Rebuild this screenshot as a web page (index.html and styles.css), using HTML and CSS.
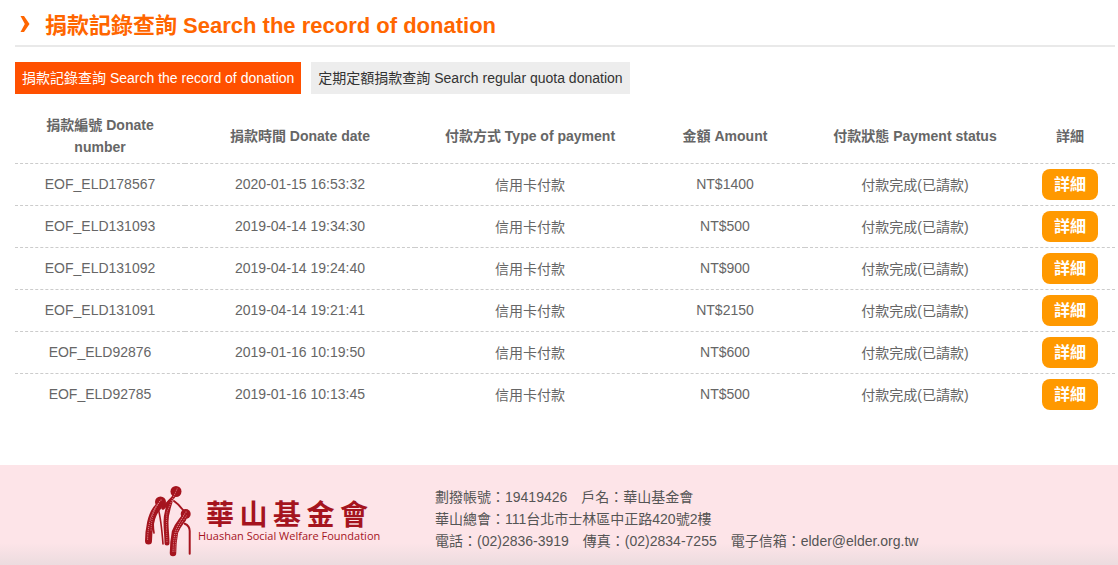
FILE: index.html
```html
<!DOCTYPE html>
<html lang="zh-Hant">
<head>
<meta charset="utf-8">
<title>捐款記錄查詢</title>
<link rel="stylesheet" href="styles.css">
</head>
<body>
<main class="content">
  <h1 class="page-title">
    <svg class="chevron" width="10" height="16" viewBox="0 0 10 16"><path d="M0.500 0 H4 L9.500 8 L4 16 H0.500 L4.800 8 Z" fill="#ff6600"/></svg>
    <span>捐款記錄查詢 Search the record of donation</span>
  </h1>
  <nav class="tabs">
    <a class="tab tab-active">捐款記錄查詢 Search the record of donation</a>
    <a class="tab">定期定額捐款查詢 Search regular quota donation</a>
  </nav>
  <table class="records">
    <colgroup><col class="c1"><col class="c2"><col class="c3"><col class="c4"><col class="c5"><col class="c6"></colgroup>
    <thead>
      <tr><th>捐款編號 Donate number</th><th>捐款時間 Donate date</th><th>付款方式 Type of payment</th><th>金額 Amount</th><th>付款狀態 Payment status</th><th>詳細</th></tr>
    </thead>
    <tbody>
      <tr><td>EOF_ELD178567</td><td>2020-01-15 16:53:32</td><td>信用卡付款</td><td>NT$1400</td><td>付款完成(已請款)</td><td><a class="btn">詳細</a></td></tr>
      <tr><td>EOF_ELD131093</td><td>2019-04-14 19:34:30</td><td>信用卡付款</td><td>NT$500</td><td>付款完成(已請款)</td><td><a class="btn">詳細</a></td></tr>
      <tr><td>EOF_ELD131092</td><td>2019-04-14 19:24:40</td><td>信用卡付款</td><td>NT$900</td><td>付款完成(已請款)</td><td><a class="btn">詳細</a></td></tr>
      <tr><td>EOF_ELD131091</td><td>2019-04-14 19:21:41</td><td>信用卡付款</td><td>NT$2150</td><td>付款完成(已請款)</td><td><a class="btn">詳細</a></td></tr>
      <tr><td>EOF_ELD92876</td><td>2019-01-16 10:19:50</td><td>信用卡付款</td><td>NT$600</td><td>付款完成(已請款)</td><td><a class="btn">詳細</a></td></tr>
      <tr><td>EOF_ELD92785</td><td>2019-01-16 10:13:45</td><td>信用卡付款</td><td>NT$500</td><td>付款完成(已請款)</td><td><a class="btn">詳細</a></td></tr>
    </tbody>
  </table>
</main>
<footer class="footer">
  <div class="logo">
    <svg class="logo-mark" width="50" height="72" viewBox="0 0 50 72">
      <g fill="none" stroke="#a5141e" stroke-linecap="round" stroke-linejoin="round">
        <path d="M15 21 C11 25 9 30 7.500 37 C6 44 5.500 50 5.500 55" stroke-width="7"/>
        <path d="M15 22 C18 32 19 45 20 58" stroke-width="1.600"/>
        <path d="M11 29 C10 36 10 42 11 47" stroke-width="1.600"/>
        <path d="M27 16 C25 22 23 28 23 36 C23 44 24 50 24 57" stroke-width="5"/>
        <path d="M31 10 C30 12 28 14 20 22" stroke-width="3.500"/>
        <path d="M31 15 C34 17 37 20 40 24" stroke-width="2"/>
        <path d="M40 33 C37 37 34 40 32 46 C30.500 54 30 60 30 67" stroke-width="6.500"/>
        <path d="M41.700 37.700 C45 39 46.700 41 46.700 45 L46.700 67.700" stroke-width="2"/>
      </g>
      <g fill="#a5141e">
        <circle cx="33" cy="5.500" r="5.500"/>
        <circle cx="17.500" cy="16" r="5.500"/>
        <circle cx="42.700" cy="28" r="5"/>
      </g>
      <g fill="none" stroke="#f2a9b1" stroke-linecap="round" stroke-dasharray=".1 2" opacity=".85">
        <path d="M34 3 C32 8 28 16 24 26 C23 36 23.800 50 24 56" stroke-width="1"/>
        <path d="M18 14 C12 21 8.500 28 6.500 37 C5 44 4.600 50 4.600 55" stroke-width="1.100"/>
        <path d="M15 18 C10.500 24 8.500 32 8 45" stroke-width="1"/>
        <path d="M43 26 C38 34 34 39 32 47 C30.700 54 30 60 30 66" stroke-width="1.100"/>
        <path d="M44 29 C40 35 36 40 34 46 C32.700 54 32 60 32 66" stroke-width="1" stroke-dashoffset="1"/>
      </g>
    </svg>
    <div class="logo-text">
      <div class="logo-name"><span>華</span><span>山</span><span>基</span><span>金</span><span>會</span></div>
      <div class="logo-en">Huashan Social Welfare Foundation</div>
    </div>
  </div>
  <div class="contact">
    <p>劃撥帳號：19419426<span class="gap"></span>戶名：華山基金會</p>
    <p>華山總會：111台北市士林區中正路420號2樓</p>
    <p>電話：(02)2836-3919<span class="gap"></span>傳真：(02)2834-7255<span class="gap"></span>電子信箱：elder@elder.org.tw</p>
  </div>
</footer>
</body>
</html>
```
FILE: styles.css
```css
* { box-sizing: border-box; }
html, body { margin: 0; padding: 0; }
body {
  font-family: "Liberation Sans", "Noto Sans CJK TC", sans-serif;
  font-size: 14px;
  color: #666;
  background: #fff;
  overflow: hidden;
  height: 565px;
  display: flex;
  flex-direction: column;
}
.content { padding: 0 3px 0 15px; flex: 1; }
.page-title {
  margin: 0;
  height: 47px;
  padding: 0 0 0 5px;
  display: flex;
  align-items: center;
  gap: 15px;
  font-size: 22px;
  font-weight: 700;
  color: #ff6600;
  border-bottom: 2px solid #e9e9e9;
}
.page-title .chevron { margin-top: 3px; }
.tabs { display: flex; gap: 10px; margin-top: 15px; }
.tab {
  height: 32px;
  line-height: 32px;
  padding: 0 7px;
  background: #ededed;
  color: #333;
  white-space: nowrap;
}
.tab-active { background: #ff5000; color: #fff; }
.records {
  width: 1100px;
  margin-top: 15px;
  border-collapse: collapse;
  table-layout: fixed;
}
.c1 { width: 170px; }
.c2, .c3 { width: 230px; }
.c4 { width: 160px; }
.c5 { width: 220px; }
.c6 { width: 90px; }
.records th {
  height: 54px;
  padding: 4px 20px;
  line-height: 22px;
  font-weight: 700;
  color: #666;
  text-align: center;
  border-bottom: 1px dashed #ccc;
}
.records td {
  height: 42px;
  padding: 0;
  text-align: center;
  border-bottom: 1px dashed #ccc;
}
.records tbody tr:last-child td { border-bottom: 0; }
.btn {
  display: block;
  width: 56px;
  height: 31px;
  margin: 0 auto;
  line-height: 31px;
  border-radius: 8px;
  background: #ff9900;
  color: #fff;
  font-size: 16px;
  font-weight: 700;
}
.footer {
  height: 100px;
  flex: none;
  display: flex;
  padding-left: 143px;
  background: linear-gradient(#fde4e8 0, #fde4e8 78%, #ecdcdf 100%);
}
.logo { display: flex; width: 292px; padding-top: 21px; }
.logo-mark { flex: none; }
.logo-text { margin: 16px 0 0 5px; }
.logo-name {
  display: flex;
  justify-content: space-between;
  width: 162px;
  margin-left: 8px;
  font-size: 28px;
  line-height: 28px;
  font-weight: 700;
  color: #a5141e;
}
.logo-en {
  font-family: "Open Sans", sans-serif;
  font-size: 11px;
  line-height: 12px;
  color: #a5141e;
  white-space: nowrap;
}
.contact { padding-top: 21px; color: #555; }
.contact p { margin: 0; line-height: 22px; white-space: nowrap; }
.gap { display: inline-block; width: 14px; }
```
